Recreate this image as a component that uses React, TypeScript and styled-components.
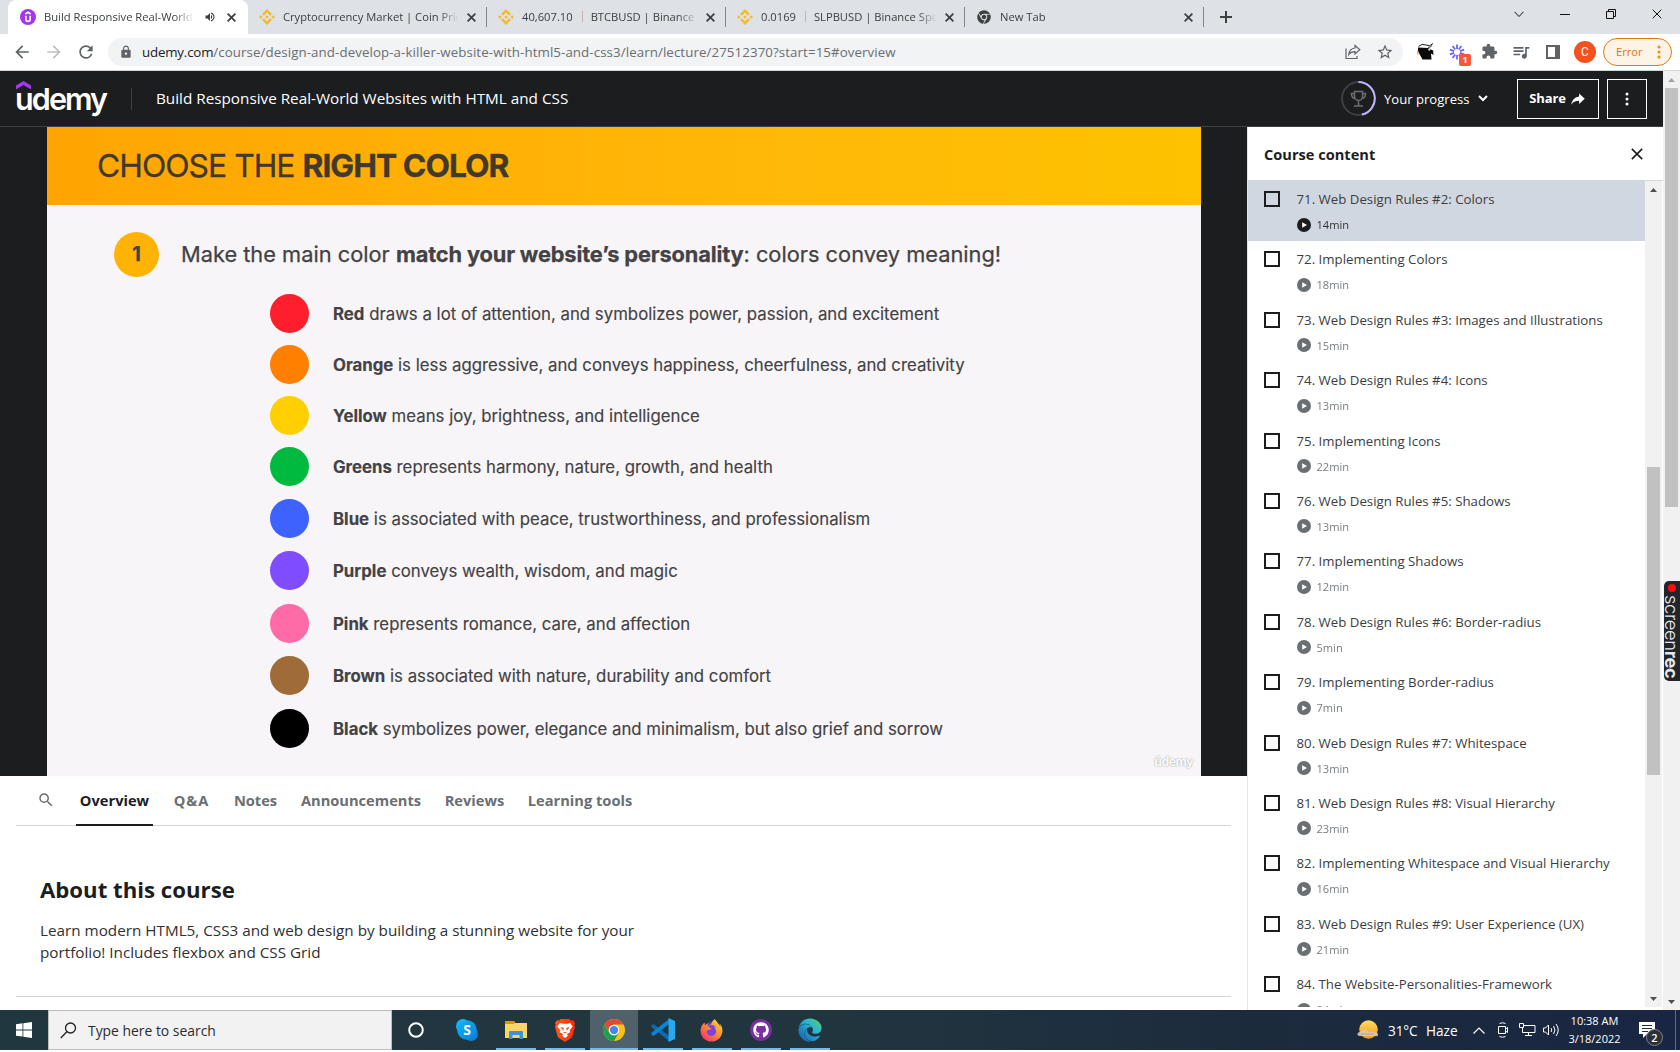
import React from "react";
import styled, { createGlobalStyle, css } from "styled-components";
import { MdLock, MdStarBorder, MdExtension, MdQueueMusic, MdRefresh, MdArrowBack, MdArrowForward, MdVolumeUp, MdSearch } from "react-icons/md";
import { SiBinance } from "react-icons/si";
import { IoMdShareAlt } from "react-icons/io";
import { FaGithub, FaFirefoxBrowser, FaEdge, FaChrome } from "react-icons/fa";

const ui = `"Open Sans", "Noto Sans", sans-serif`;

const Global = createGlobalStyle`
  html, body { margin: 0; padding: 0; background: #fff; overflow: hidden; }
  * { box-sizing: border-box; }
  body { font-family: ${ui}; color: #1c1d1f; }
  svg { display: block; flex: none; }
`;

const Screen = styled.div`
  width: 1680px;
  height: 1052px;
  display: flex;
  flex-direction: column;
  overflow: hidden;
  background: #fff;
`;

/* ---------- browser: tab strip ---------- */
const TabStrip = styled.div`
  height: 34px;
  flex: none;
  display: flex;
  padding-left: 8px;
  background: #dee1e6;
`;
const Tab = styled.div<{ $active?: boolean }>`
  width: ${(p) => (p.$active ? 240 : 239)}px;
  height: 34px;
  display: flex;
  align-items: center;
  padding: 0 ${(p) => (p.$active ? 12 : 11.5)}px 0 ${(p) => (p.$active ? 12 : 11)}px;
  gap: 8px;
  color: #3c4043;
  ${(p) =>
    p.$active
      ? css`
          background: #fff;
          border-radius: 8px 8px 0 0;
        `
      : css`
          background: linear-gradient(#84888c, #84888c) right 7px / 1px 20px no-repeat;
        `}
`;
const TabIcon = styled.div`
  width: 16px;
  height: 16px;
  flex: none;
  display: flex;
  align-items: center;
  justify-content: center;
  color: #f3ba2f;
`;
const TabTitle = styled.div`
  flex: 1;
  min-width: 0;
  overflow: hidden;
  white-space: pre;
  font-size: 11.2px;
  line-height: 20px;
  mask-image: linear-gradient(90deg, #000 calc(100% - 20px), transparent);
`;
const TabAudio = styled.div`
  margin: 0 3px 0 2px;
`;
const Pipe = styled.span`
  display: inline-block;
  width: 1px;
  height: 11px;
  margin: 0 8px 0 9px;
  background: #c3b3b5;
  vertical-align: -1px;
`;
const WindowButtons = styled.div`
  margin-left: auto;
  display: flex;
  height: 28px;
`;
const WindowButton = styled.div`
  width: 46px;
  display: flex;
  align-items: center;
  justify-content: center;
`;
const NewTab = styled.div`
  width: 45px;
  display: flex;
  align-items: center;
  justify-content: center;
  padding-right: 1px;
`;

/* ---------- browser: toolbar ---------- */
const Toolbar = styled.div`
  height: 37px;
  flex: none;
  display: flex;
  align-items: center;
  padding: 0 8px 1px 6px;
  border-bottom: 1px solid #d3d6d8;
  color: #5f6368;
`;
const ToolSlot = styled.div<{ $first?: boolean }>`
  width: 32px;
  height: 28px;
  margin-left: ${(p) => (p.$first ? 6 : 0)}px;
  display: flex;
  align-items: center;
  justify-content: center;
  flex: none;
  position: relative;
`;
const Omnibox = styled.div`
  width: 1295px;
  height: 28px;
  margin-left: 6px;
  display: flex;
  align-items: center;
  padding: 0 2px 0 11px;
  border-radius: 14px;
  background: #f1f3f4;
`;
const Url = styled.div`
  flex: 1;
  margin-left: 9px;
  font-size: 13.3px;
  line-height: 20px;
  letter-spacing: 0.09px;
  color: #6a6e73;
  white-space: nowrap;
`;
const Host = styled.span`
  color: #202124;
  letter-spacing: -0.18px;
`;
const ExtBadge = styled.div`
  position: absolute;
  right: 2px;
  bottom: 0;
  width: 12px;
  height: 12px;
  border-radius: 2px;
  background: #f9573b;
  color: #fff;
  font: 700 9px/12px ${ui};
  text-align: center;
`;
const Avatar = styled.div`
  width: 22px;
  height: 22px;
  border-radius: 50%;
  background: #f4511e;
  color: #fff;
  font: 400 12px/22px Roboto, sans-serif;
  text-align: center;
`;
const ErrorPill = styled.div`
  width: 69px;
  height: 28px;
  margin-left: 2px;
  display: flex;
  align-items: center;
  justify-content: space-between;
  padding: 0 10.5px 0 12px;
  border: 1px solid #e07b13;
  border-radius: 14px;
  background: #fdf3e7;
  color: #dd7611;
  font-size: 11.2px;
`;

/* ---------- udemy ---------- */
const Page = styled.div`
  height: 939px;
  flex: none;
  display: flex;
`;
const Site = styled.div`
  width: 1663px;
  display: flex;
  flex-direction: column;
`;
const Header = styled.header`
  height: 56px;
  flex: none;
  display: flex;
  align-items: center;
  padding: 0 16px;
  background: #1c1d1f;
  border-bottom: 1px solid #3e4143;
  color: #fff;
`;
const Logo = styled.div`
  width: 115px;
  height: 55px;
  padding-top: 10px;
  display: flex;
  flex-direction: column;
`;
const LogoText = styled.div`
  margin: -10px 0 0 -1px;
  font: 600 30.5px/38px Inter, sans-serif;
  letter-spacing: -1.9px;
`;
const Rule = styled.div`
  width: 1px;
  height: 22px;
  background: #3e4143;
`;
const CourseName = styled.div`
  margin: -2px 0 0 24px;
  flex: 1;
  font-size: 15.27px;
  line-height: 22px;
  white-space: nowrap;
`;
const Progress = styled.div`
  display: flex;
  align-items: center;
  font-size: 13.1px;
  white-space: nowrap;
`;
const ProgressLabel = styled.span`
  margin: 0 9px 0 8px;
  width: 85px;
`;
const HeaderButton = styled.div<{ $w: number; $gap?: number }>`
  width: ${(p) => p.$w}px;
  height: 40px;
  margin-left: ${(p) => p.$gap ?? 8}px;
  display: flex;
  align-items: center;
  justify-content: center;
  gap: 3px;
  border: 1px solid #fff;
  font-size: 13px;
  font-weight: 700;
  line-height: 36px;
`;
const ButtonLabel = styled.span`
  margin-top: -2px;
  letter-spacing: -0.15px;
`;
const Body = styled.div`
  flex: 1;
  display: flex;
  min-height: 0;
`;
const Main = styled.main`
  width: 1247px;
  display: flex;
  flex-direction: column;
`;
const Player = styled.div`
  height: 649px;
  flex: none;
  padding: 0 46px 0 47px;
  background: #1c1d1f;
`;
const Slide = styled.div`
  height: 649px;
  position: relative;
  background: #f7f5f8;
  color: #434244;
  font-family: Inter, sans-serif;
`;
const SlideTitle = styled.div`
  height: 78px;
  padding: 0 0 0 50px;
  background: linear-gradient(90deg, #ffa503, #ffb005 35%, #ffb908 65%, #fec200);
  color: #40392c;
  font-size: 31.8px;
  line-height: 78px;
  letter-spacing: -0.97px;
  white-space: nowrap;
  -webkit-text-stroke: 0.3px #40392c;
  b { font-weight: 700; }
`;
const SlidePoint = styled.div`
  height: 46px;
  margin: 26px 0 17px 67px;
  display: flex;
  align-items: center;
  font-size: 21.8px;
  white-space: nowrap;
  -webkit-text-stroke: 0.25px #434244;
  b {
    font-weight: 700;
    letter-spacing: -0.15px;
  }
`;
const PointNumber = styled.div`
  width: 45px;
  height: 45px;
  margin-right: 22px;
  border-radius: 50%;
  background: #ffb405;
  font-size: 20px;
  font-weight: 700;
  line-height: 45px;
  text-align: center;
`;
const ColorRow = styled.div<{ $h: number }>`
  height: ${(p) => p.$h}px;
  padding-left: 223px;
  display: flex;
  align-items: flex-start;
  font-size: 16.8px;
  line-height: 40px;
  white-space: nowrap;
  -webkit-text-stroke: 0.15px #434244;
  b { font-weight: 700; }
`;
const Swatch = styled.div<{ $c: string }>`
  width: 39px;
  height: 39px;
  margin-right: 24px;
  border-radius: 50%;
  background: ${(p) => p.$c};
`;
const Watermark = styled.div`
  position: absolute;
  right: 8px;
  bottom: 5px;
  color: #fff;
  font: 600 12.5px/18px Inter, sans-serif;
  letter-spacing: -0.5px;
  text-shadow: 0 0 2px #aaa, 0 0 1px #bbb;
`;
const CourseTabs = styled.nav`
  height: 50px;
  flex: none;
  margin: 0 16px;
  padding-left: 21px;
  display: flex;
  border-bottom: 1px solid #d1d7dc;
  color: #6a6f73;
`;
const SearchTab = styled.div`
  width: 39px;
  padding-top: 15px;
`;
const CourseTab = styled.div<{ $active?: boolean; $w: number; $track?: number }>`
  width: ${(p) => p.$w}px;
  height: 50px;
  margin-right: 16px;
  text-align: center;
  font-size: 14.65px;
  font-weight: 700;
  letter-spacing: ${(p) => p.$track ?? 0}px;
  line-height: 49px;
  white-space: nowrap;
  ${(p) =>
    p.$active &&
    css`
      color: #1c1d1f;
      border-bottom: 2px solid #1c1d1f;
    `}
`;
const About = styled.section`
  height: 171px;
  flex: none;
  margin: 0 16px;
  padding: 48px 24px 0;
  border-bottom: 1px solid #d1d7dc;
`;
const AboutTitle = styled.h2`
  margin: 0;
  font-size: 22.2px;
  font-weight: 700;
  line-height: 31px;
`;
const AboutText = styled.p`
  margin: 14px 0 0;
  font-size: 15.26px;
  line-height: 22px;
  color: #2f3032;
  white-space: nowrap;
`;

/* ---------- course content ---------- */
const Sidebar = styled.aside`
  width: 416px;
  display: flex;
  flex-direction: column;
  border-left: 1px solid #e2e6ea;
`;
const SideHeader = styled.div`
  height: 54px;
  flex: none;
  display: flex;
  align-items: center;
  justify-content: space-between;
  padding: 0 20px 0 16px;
  border-bottom: 1px solid #d1d7dc;
  font-size: 14.6px;
  font-weight: 700;
`;
const SideBody = styled.div`
  height: 826px;
  display: flex;
  overflow: hidden;
`;
const Lectures = styled.div`
  width: 397px;
  height: 826px;
  overflow: hidden;
`;
const Lecture = styled.div<{ $active?: boolean }>`
  height: 60.4px;
  display: flex;
  padding: 10px 16px 0;
  background: ${(p) => (p.$active ? "#d1d7e0" : "#fff")};
  color: ${(p) => (p.$active ? "#1c1d1f" : "#6a6f73")};
`;
const Check = styled.div`
  width: 16px;
  height: 16px;
  flex: none;
  margin-right: 16.5px;
  border: 2px solid #1c1d1f;
`;
const LectureText = styled.div`
  margin-top: -2px;
`;
const LectureName = styled.div`
  font-size: 13.26px;
  line-height: 20px;
  color: #3c3d3f;
  white-space: nowrap;
`;
const Duration = styled.div`
  margin-top: 5px;
  display: flex;
  align-items: center;
  gap: 6px;
  font-size: 11.1px;
  line-height: 20px;
`;
const Minutes = styled.span`
  padding-top: 1px;
  opacity: 0.9;
`;
const ScrollTrack = styled.div<{ $h: number }>`
  width: 17px;
  height: ${(p) => p.$h}px;
  flex: none;
  display: flex;
  flex-direction: column;
  align-items: center;
  background: #f1f1f1;
  svg:last-child { margin-top: auto; }
`;
const ScrollThumb = styled.div<{ $top: number; $h: number }>`
  width: 13px;
  height: ${(p) => p.$h}px;
  margin-top: ${(p) => p.$top}px;
  background: #c1c1c1;
`;
const ScreenRec = styled.div`
  position: absolute;
  left: 1664px;
  top: 581px;
  width: 16px;
  height: 100px;
  padding: 3px 0 0;
  display: flex;
  align-items: center;
  gap: 3px;
  writing-mode: vertical-rl;
  border-radius: 5px 0 0 5px;
  background: #22252b;
  color: #e8e8ea;
  font: 300 18.3px/16px Inter, sans-serif;
  letter-spacing: -0.35px;
  b { font-weight: 700; }
`;
const RecDot = styled.i`
  width: 8px;
  height: 8px;
  border-radius: 50%;
  background: #fb0d0d;
`;

/* ---------- taskbar ---------- */
const Taskbar = styled.div`
  height: 40px;
  flex: none;
  display: flex;
  background: linear-gradient(90deg, #213740, #21353f 50%, #1c2b3c 75%, #192643);
  color: #fff;
`;
const Start = styled.div`
  width: 48px;
  display: flex;
  align-items: center;
  justify-content: center;
`;
const TaskSearch = styled.div`
  width: 344px;
  display: flex;
  align-items: center;
  gap: 11px;
  padding-left: 11px;
  border: 1px solid #bdbdbd;
  background: #f2f2f2;
  color: #2c2c2c;
  font-size: 13.9px;
`;
const Cortana = styled.div`
  width: 50px;
  padding-right: 2px;
  display: flex;
  align-items: center;
  justify-content: center;
`;
const TaskApp = styled.div<{ $open?: boolean; $active?: boolean }>`
  width: 49px;
  height: 40px;
  display: flex;
  align-items: center;
  justify-content: center;
  ${(p) =>
    p.$open &&
    css`
      background: linear-gradient(#76b9ed, #76b9ed) center bottom / 40px 2px no-repeat;
    `}
  ${(p) =>
    p.$active &&
    css`
      background: linear-gradient(#76b9ed, #76b9ed) center bottom / 48px 2px no-repeat,
        linear-gradient(#4f616a, #4f616a) center / 48px 40px no-repeat;
    `}
`;
const Disc = styled.div<{ $bg: string; $s: number }>`
  width: ${(p) => p.$s}px;
  height: ${(p) => p.$s}px;
  display: flex;
  align-items: center;
  justify-content: center;
  border-radius: 50%;
  background: ${(p) => p.$bg};
`;
const Tray = styled.div`
  margin-left: auto;
  width: 323px;
  display: flex;
  align-items: center;
  font-size: 13.6px;
  white-space: nowrap;
`;
const Weather = styled.div`
  display: flex;
  width: 110px;
  align-items: center;
`;
const Temperature = styled.span`
  width: 38px;
  margin-left: 9px;
  letter-spacing: -0.1px;
`;
const TrayIcon = styled.div`
  width: 24px;
  display: flex;
  justify-content: center;
`;
const Clock = styled.div`
  width: 64px;
  margin-top: -1px;
  padding-right: 1px;
  font-size: 11px;
  line-height: 18px;
  text-align: center;
`;
const Notice = styled.div`
  position: relative;
  width: 40px;
  height: 40px;
  display: flex;
  align-items: center;
  justify-content: center;
`;
const NoticeCount = styled.div`
  position: absolute;
  right: 4px;
  bottom: 4px;
  width: 17px;
  height: 17px;
  border: 1px solid #80858d;
  border-radius: 50%;
  background: #2a2f38;
  font-size: 11px;
  font-weight: 600;
  line-height: 15px;
  text-align: center;
`;
const PeekEdge = styled.div`
  width: 5px;
  height: 40px;
  margin-left: auto;
  border-left: 1px solid #5f6a7c;
`;

/* ---------- icons ---------- */
const Cross = ({ s = 9, w = 1.8, c = "#3c4043" }: { s?: number; w?: number; c?: string }) => (
  <svg width={s} height={s} viewBox="0 0 10 10"><path d="M.7.7l8.6 8.6M9.3.7L.7 9.3" stroke={c} strokeWidth={(w * 10) / s} fill="none" /></svg>
);
const Dots = ({ c = "#fff", h = 14 }: { c?: string; h?: number }) => (
  <svg width="4" height={h} viewBox="0 0 4 14"><circle cx="2" cy="2" r="1.500" fill={c} /><circle cx="2" cy="7" r="1.500" fill={c} /><circle cx="2" cy="12" r="1.500" fill={c} /></svg>
);
const Arrow = ({ up, c = "#505050" }: { up?: boolean; c?: string }) => (
  <svg width="17" height="17"><path d={up ? "M5 11h7L8.500 7z" : "M5 7h7L8.500 11z"} fill={c} /></svg>
);
const PlayDot = () => (
  <svg width="14" height="14"><circle cx="7" cy="7" r="7" fill="currentColor" /><path d="M5.200 4.200v5.600L10 7z" fill="#fff" /></svg>
);
const WindowsLogo = () => (
  <svg width="16" height="16" viewBox="0 0 16 16"><path d="M0 2.200l6.500-.9v6.200H0zM7.300 1.200L16 0v7.500H7.300zM0 8.400h6.500v6.200L0 13.700zM7.300 8.400H16V16l-8.700-1.200z" fill="#fff" /></svg>
);
const ChromeIcon = () => (
  <svg width="22" height="22" viewBox="0 0 24 24">
    <circle cx="12" cy="12" r="12" fill="#fbc116" />
    <path d="M1.600 6A12 12 0 0 1 22.400 6H12a6 6 0 0 0-5.200 9z" fill="#dd4b3b" />
    <path d="M1.600 6A12 12 0 0 0 12 24l5.200-9A6 6 0 0 1 6.800 15z" fill="#1a9f56" />
    <circle cx="12" cy="12" r="5.600" fill="#fff" /><circle cx="12" cy="12" r="4.500" fill="#4287f3" />
  </svg>
);
const VsCode = () => (
  <svg width="24" height="24" viewBox="0 0 24 24">
    <path d="M.3 7.800L2.500 6 18 17.800V23L.3 9z" fill="#0a6bb5" />
    <path d="M.3 16.200L2.500 18 18 6.200V1L.3 15z" fill="#0b84d1" />
    <path d="M17.500 0L24 3v18l-6.500 3z" fill="#29a8ee" />
  </svg>
);
const Folder = () => (
  <svg width="22" height="18" viewBox="0 0 22 18">
    <path d="M0 0h9l1 2h12v4H0z" fill="#fcd565" /><path d="M0 0h9l1 1.500L9 3H0z" fill="#d9980f" /><path d="M0 3h22v14H0z" fill="#fcd565" />
    <path d="M4 18v-7q0-1 1-1h12q1 0 1 1v7h-3.500v-4h-7v4z" fill="#3a92da" />
  </svg>
);
const Skype = () => (
  <svg width="22" height="22" viewBox="0 0 22 22">
    <circle cx="7" cy="7" r="7" fill="#12b4f3" /><circle cx="15" cy="15" r="7" fill="#0a7fdb" /><circle cx="11" cy="11" r="9.800" fill="url(#skype)" />
    <text x="11" y="16" fontFamily="Open Sans, sans-serif" fontWeight="700" fontSize="14" textAnchor="middle" fill="#fff">S</text>
  </svg>
);
const Brave = () => (
  <svg width="20" height="23" viewBox="0 0 21 24">
    <path d="M4.500 1.500L6 0h9l1.500 1.500L19 1.300 21 4l-.7 2L21 8l-3 11-7.500 5L3 19 0 8l.7-2L0 4l2-2.700z" fill="url(#brave)" />
    <path d="M5 4l3.500.8h4L16 4l2.500 3.800-3 4 .6 2-3.600 2 1 1.700-3 2.300-3-2.300 1-1.700-3.600-2 .6-2-3-4z" fill="#fff" />
    <path d="M5.500 8l3.800 1.300-.8 3zM15.500 8l-3.800 1.300.8 3zM8 13.500h5l-2.500 1.500z" fill="#f7501f" />
  </svg>
);
const Sun = () => (
  <svg width="22" height="20" viewBox="0 0 22 20">
    <circle cx="11.500" cy="9.500" r="9.300" fill="url(#sun)" />
    <path d="M3 16q-3-.5-2.500-2.500T4 12q1-2.500 4-2t3.500 2.500q3-2 5 0h2q3 .5 2.500 2.500T18 16z" fill="#d9c9b4" opacity=".9" />
    <path d="M4 14h13" stroke="#b99f85" strokeWidth="1" />
  </svg>
);
const Defs = () => (
  <svg width="0" height="0" style={{ position: "absolute" }}>
    <defs>
      <linearGradient id="fox" x1="1" y1="0" x2="0.200" y2="1"><stop offset="0" stopColor="#ffe14a" /><stop offset=".45" stopColor="#ff9a2a" /><stop offset="1" stopColor="#f5306a" /></linearGradient>
      <linearGradient id="edge" x1="1" y1="0" x2="0" y2="1"><stop offset="0" stopColor="#5ad45a" /><stop offset=".4" stopColor="#2bb5d8" /><stop offset="1" stopColor="#0f55a8" /></linearGradient>
      <linearGradient id="brave" x1="0" y1="0" x2="1" y2="0"><stop offset="0" stopColor="#ff5a1f" /><stop offset="1" stopColor="#ff2a00" /></linearGradient>
      <linearGradient id="sun" x1="0" y1="0" x2="0" y2="1"><stop offset="0" stopColor="#ffdf5d" /><stop offset="1" stopColor="#f79324" /></linearGradient>
      <linearGradient id="skype" x1="0" y1="0" x2="1" y2="1"><stop offset="0" stopColor="#12b4f3" /><stop offset="1" stopColor="#0a7fdb" /></linearGradient>
    </defs>
  </svg>
);

const colors: [string, string, string, number][] = [
  ["Red", " draws a lot of attention, and symbolizes power, passion, and excitement", "#ff1e2d", 51],
  ["Orange", " is less aggressive, and conveys happiness, cheerfulness, and creativity", "#ff8000", 51],
  ["Yellow", " means joy, brightness, and intelligence", "#ffcf00", 51],
  ["Greens", " represents harmony, nature, growth, and health", "#00b93f", 52],
  ["Blue", " is associated with peace, trustworthiness, and professionalism", "#3d63ff", 52],
  ["Purple", " conveys wealth, wisdom, and magic", "#7f4dff", 53],
  ["Pink", " represents romance, care, and affection", "#ff6ba6", 52],
  ["Brown", " is associated with nature, durability and comfort", "#9f6b38", 53],
  ["Black", " symbolizes power, elegance and minimalism, but also grief and sorrow", "#000000", 40],
];

const lectures: [string, string][] = [
  ["71. Web Design Rules #2: Colors", "14min"],
  ["72. Implementing Colors", "18min"],
  ["73. Web Design Rules #3: Images and Illustrations", "15min"],
  ["74. Web Design Rules #4: Icons", "13min"],
  ["75. Implementing Icons", "22min"],
  ["76. Web Design Rules #5: Shadows", "13min"],
  ["77. Implementing Shadows", "12min"],
  ["78. Web Design Rules #6: Border-radius", "5min"],
  ["79. Implementing Border-radius", "7min"],
  ["80. Web Design Rules #7: Whitespace", "13min"],
  ["81. Web Design Rules #8: Visual Hierarchy", "23min"],
  ["82. Implementing Whitespace and Visual Hierarchy", "16min"],
  ["83. Web Design Rules #9: User Experience (UX)", "21min"],
  ["84. The Website-Personalities-Framework", "24min"],
];

export default function App() {
  return (
    <>
      <Global />
      <Defs />
      <Screen>
        <TabStrip>
          <Tab $active>
            <TabIcon><svg width="16" height="16"><circle cx="8" cy="8" r="8" fill="#a435f0" /><path d="M5.300 5L8 3.300 10.700 5M5.800 6.800v3.400q0 2.200 2.200 2.200t2.200-2.200V6.800" stroke="#fff" strokeWidth="1.600" fill="none" /></svg></TabIcon>
            <TabTitle>Build Responsive Real-World Websites</TabTitle>
            <TabAudio><MdVolumeUp size={12} /></TabAudio><Cross />
          </Tab>
          <Tab><TabIcon><SiBinance size={16} /></TabIcon><TabTitle>Cryptocurrency Market | Coin Prices</TabTitle><Cross /></Tab>
          <Tab><TabIcon><SiBinance size={16} /></TabIcon><TabTitle>40,607.10<Pipe />BTCBUSD | Binance Spot</TabTitle><Cross /></Tab>
          <Tab><TabIcon><SiBinance size={16} /></TabIcon><TabTitle>0.0169<Pipe />SLPBUSD | Binance Spot</TabTitle><Cross /></Tab>
          <Tab><TabIcon><FaChrome size={14} color="#3c4043" /></TabIcon><TabTitle>New Tab</TabTitle><Cross /></Tab>
          <NewTab><svg width="12" height="12"><path d="M6 0v12M0 6h12" stroke="#3c4043" strokeWidth="2" /></svg></NewTab>
          <WindowButtons>
            <WindowButton><svg width="10" height="7"><path d="M.5.8L5 5.500 9.500.8" stroke="#111" fill="none" /></svg></WindowButton>
            <WindowButton><svg width="10" height="2"><path d="M0 1.500h10" stroke="#111" /></svg></WindowButton>
            <WindowButton><svg width="11" height="11"><path d="M.5 2.500h7v7h-7zM2.500 2.500v-2h7v7h-2" stroke="#111" fill="none" /></svg></WindowButton>
            <WindowButton><Cross s={10} w={1} c="#111" /></WindowButton>
          </WindowButtons>
        </TabStrip>
        <Toolbar>
          <ToolSlot><MdArrowBack size={20} /></ToolSlot>
          <ToolSlot><MdArrowForward size={20} color="#bdc0c3" /></ToolSlot>
          <ToolSlot><MdRefresh size={20} /></ToolSlot>
          <Omnibox>
            <MdLock size={14} />
            <Url><Host>udemy.com</Host>/course/design-and-develop-a-killer-website-with-html5-and-css3/learn/lecture/27512370?start=15#overview</Url>
            <ToolSlot><svg width="16" height="16"><path d="M1 4.500v10h11V12" stroke="#5f6368" strokeWidth="1.200" fill="none" /><path d="M10 1.500l4.800 4.300L10 10V7.600Q6 7.500 3.800 10.500 4.500 4.500 10 4z" stroke="#5f6368" strokeWidth="1.200" fill="none" /></svg></ToolSlot>
            <ToolSlot><MdStarBorder size={18} /></ToolSlot>
          </Omnibox>
          <ToolSlot $first><svg width="17" height="17"><path d="M1 4.500l10 .5 5 2.500V6l.5 6-2.500-1.500.5 6H5.500L3 12 1 8z" fill="#0a0a0a" /><path d="M1.500 3.500Q5 0 9 2t7-1.500M11 4.500q3-.5 4-2" stroke="#222" fill="none" /><path d="M11 6l3 .5-2 1.500z" fill="#fff" /><path d="M0 7l2 2.500-1.500 3z" fill="#f39b20" /></svg></ToolSlot>
          <ToolSlot><svg width="16" height="16" viewBox="-8 -8 16 16">{[0, 36, 72, 108, 144, 180, 216, 252, 288, 324].map((a) => <path key={a} d="M0-3v-4.500" stroke="#6b63f6" strokeWidth="1.800" transform={`rotate(${a})`} />)}</svg><ExtBadge>1</ExtBadge></ToolSlot>
          <ToolSlot><MdExtension size={17} /></ToolSlot>
          <ToolSlot><MdQueueMusic size={20} /></ToolSlot>
          <ToolSlot><svg width="14" height="14"><path d="M1 1h12v12H1z" stroke="#5f6368" strokeWidth="2" fill="none" /><path d="M9 1h4v12H9z" fill="#5f6368" /></svg></ToolSlot>
          <ToolSlot><Avatar>C</Avatar></ToolSlot>
          <ErrorPill>Error<Dots c="#ef8a17" /></ErrorPill>
        </Toolbar>
        <Page>
          <Site>
            <Header>
              <Logo>
                <svg width="15" height="9"><path d="M0 8.500V4.500L7.500 0 15 4.500v4L7.500 4z" fill="#a435f0" /></svg>
                <LogoText>udemy</LogoText>
              </Logo>
              <Rule />
              <CourseName>Build Responsive Real-World Websites with HTML and CSS</CourseName>
              <Progress>
                <svg width="35" height="35" viewBox="-17.500 -17.500 35 35">
                  <circle r="16.500" fill="none" stroke="#3e4143" strokeWidth="2" />
                  <path d="M0-16.500A16.500 16.500 0 0 1 3.400 16.100" fill="none" stroke="#c0b4fc" strokeWidth="2" />
                  <path d="M-4-7h8v5a4 4 0 0 1-8 0zM-4-5h-3q0 5 4 5M4-5h3q0 5-4 5M0 2v5M-4.500 7.500h9" fill="none" stroke="#6a6f73" strokeWidth="1.500" />
                </svg>
                <ProgressLabel>Your progress</ProgressLabel>
                <svg width="10" height="7"><path d="M1 1l4 4 4-4" stroke="#fff" strokeWidth="2" fill="none" /></svg>
              </Progress>
              <HeaderButton $w={82} $gap={29}><ButtonLabel>Share</ButtonLabel><IoMdShareAlt size={18} /></HeaderButton>
              <HeaderButton $w={40}><Dots /></HeaderButton>
            </Header>
            <Body>
              <Main>
                <Player>
                  <Slide>
                    <SlideTitle>CHOOSE THE <b>RIGHT COLOR</b></SlideTitle>
                    <SlidePoint><PointNumber>1</PointNumber><span>Make the main color <b>match your website’s personality</b>: colors convey meaning!</span></SlidePoint>
                    {colors.map(([name, text, c, h]) => (
                      <ColorRow key={name} $h={h}><Swatch $c={c} /><span><b>{name}</b>{text}</span></ColorRow>
                    ))}
                    <Watermark>ûdemy</Watermark>
                  </Slide>
                </Player>
                <CourseTabs>
                  <SearchTab><MdSearch size={18} /></SearchTab>
                  <CourseTab $w={77} $active>Overview</CourseTab>
                  <CourseTab $w={45} $track={1}>Q&A</CourseTab>
                  <CourseTab $w={51}>Notes</CourseTab>
                  <CourseTab $w={128}>Announcements</CourseTab>
                  <CourseTab $w={67}>Reviews</CourseTab>
                  <CourseTab $w={112}>Learning tools</CourseTab>
                </CourseTabs>
                <About>
                  <AboutTitle>About this course</AboutTitle>
                  <AboutText>Learn modern HTML5, CSS3 and web design by building a stunning website for your<br />portfolio! Includes flexbox and CSS Grid</AboutText>
                </About>
              </Main>
              <Sidebar>
                <SideHeader>Course content<Cross s={12} w={1.6} c="#1c1d1f" /></SideHeader>
                <SideBody>
                  <Lectures>
                    {lectures.map(([name, time], i) => (
                      <Lecture key={name} $active={i === 0}>
                        <Check />
                        <LectureText>
                          <LectureName>{name}</LectureName>
                          <Duration><PlayDot /><Minutes>{time}</Minutes></Duration>
                        </LectureText>
                      </Lecture>
                    ))}
                  </Lectures>
                  <ScrollTrack $h={826}><Arrow up /><ScrollThumb $top={269} $h={308} /><Arrow /></ScrollTrack>
                </SideBody>
              </Sidebar>
            </Body>
          </Site>
          <ScrollTrack $h={939}><Arrow up c="#a3a3a3" /><ScrollThumb $top={0} $h={419} /><Arrow /></ScrollTrack>
        </Page>
        <Taskbar>
          <Start><WindowsLogo /></Start>
          <TaskSearch><svg width="17" height="17"><circle cx="10.500" cy="6" r="5" stroke="#222" strokeWidth="1.300" fill="none" /><path d="M7 9.500L.8 16" stroke="#222" strokeWidth="1.300" /></svg>Type here to search</TaskSearch>
          <Cortana><svg width="16" height="16"><circle cx="8" cy="8" r="6.800" stroke="#fff" strokeWidth="2" fill="none" /></svg></Cortana>
          <TaskApp><Skype /></TaskApp>
          <TaskApp $open><Folder /></TaskApp>
          <TaskApp $open><Brave /></TaskApp>
          <TaskApp $active><ChromeIcon /></TaskApp>
          <TaskApp $open><VsCode /></TaskApp>
          <TaskApp $open><Disc $bg="radial-gradient(circle, #7542e5 40%, transparent 60%)" $s={22}><FaFirefoxBrowser size={23} fill="url(#fox)" /></Disc></TaskApp>
          <TaskApp $open><Disc $bg="#7a2f9f" $s={22}><FaGithub size={16} /></Disc></TaskApp>
          <TaskApp $open><FaEdge size={24} fill="url(#edge)" /></TaskApp>
          <Tray>
            <Weather><Sun /><Temperature>31°C</Temperature>Haze</Weather>
            <TrayIcon><svg width="12" height="7"><path d="M.5 6.500L6 1l5.500 5.500" stroke="#fff" strokeWidth="1.200" fill="none" /></svg></TrayIcon>
            <TrayIcon><svg width="12" height="16"><path d="M1.500 4.500h7v7h-7zM8.500 7l2-1.500v5L8.500 9M2.500 1.500q3-1.500 6 0M2.500 14.500q3 1.500 6 0" stroke="#fff" fill="none" /></svg></TrayIcon>
            <TrayIcon><svg width="17" height="14"><path d="M5 2.500h11v7H3.500V5M.5.500h4v4h-4zM9.500 9.500v3M6 12.500h7" stroke="#fff" fill="none" /></svg></TrayIcon>
            <TrayIcon><svg width="17" height="14"><path d="M.5 5v4h2l3 3V2l-3 3zM8 5q1.500 2 0 4M10.500 3q3 4 0 8M13 1q4.500 6 0 12" stroke="#fff" fill="none" /></svg></TrayIcon>
            <Clock>10:38 AM<br />3/18/2022</Clock>
            <Notice><svg width="16" height="18"><path d="M0 1h16v12H8l-4 4v-4H0z" fill="#fff" /><path d="M3 4.500h10M3 7.500h10M3 10.500h6" stroke="#1b2942" /></svg><NoticeCount>2</NoticeCount></Notice>
            <PeekEdge />
          </Tray>
        </Taskbar>
        <ScreenRec><RecDot /><span>screen<b>rec</b></span></ScreenRec>
      </Screen>
    </>
  );
}
